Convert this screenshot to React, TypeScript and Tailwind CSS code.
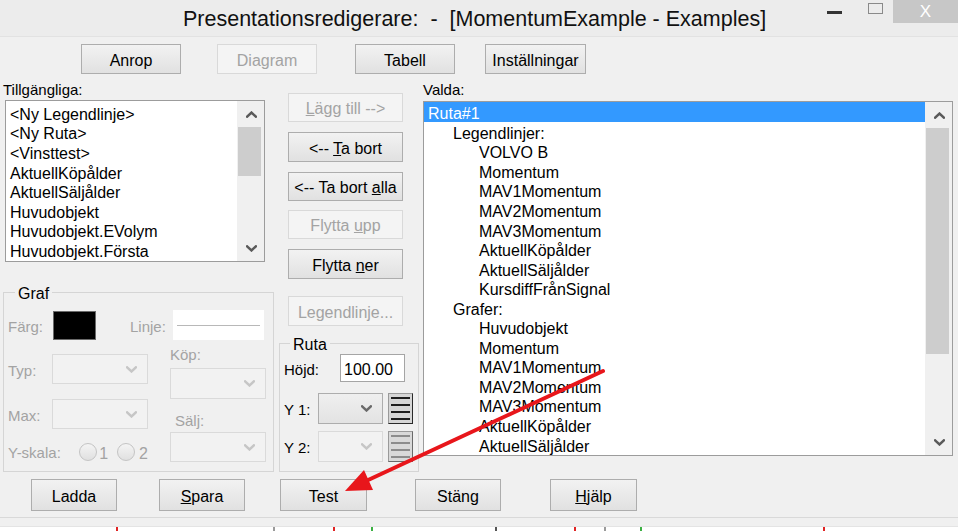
import React from "react";

function Chev({ dir, color, w = 10, h = 6, sw = 2 }: { dir: "up" | "down"; color: string; w?: number; h?: number; sw?: number }) {
  return (
    <svg width={w} height={h} viewBox="0 0 10 6" className="block">
      <path
        d={dir === "up" ? "M1 5 L5 1.2 L9 5" : "M1 1 L5 4.8 L9 1"}
        fill="none"
        stroke={color}
        strokeWidth={sw}
        strokeLinecap="square"
      />
    </svg>
  );
}

function Btn({ children, disabled, className = "" }: { children: React.ReactNode; disabled?: boolean; className?: string }) {
  return (
    <div
      className={`flex items-center justify-center border pt-[3px] text-[16px] leading-none ${
        disabled
          ? "border-[#d9d9d9] bg-[#f4f4f4] text-[#a3a3a3]"
          : "border-[#adadad] bg-linear-to-b from-[#f2f2f2] to-[#e1e1e1] text-black"
      } ${className}`}
    >
      {children}
    </div>
  );
}

function Combo({ disabled, className = "" }: { disabled?: boolean; className?: string }) {
  return (
    <div
      className={`flex items-center justify-end border pr-[10px] ${
        disabled ? "border-[#dadada] bg-[#f2f2f2]" : "border-[#adadad] bg-linear-to-b from-[#efefef] to-[#e3e3e3]"
      } ${className}`}
    >
      <Chev dir="down" color={disabled ? "#c6c6c6" : "#6a6a6a"} w={11} h={7} sw={2.2} />
    </div>
  );
}

function LinesBtn({ disabled }: { disabled?: boolean }) {
  return (
    <div
      className={`ml-[5px] flex h-full w-[25px] flex-col justify-between border border-t-[#9a9a9a] border-l-[#9a9a9a] px-[2px] py-[3px] ${
        disabled
          ? "border-r-[#6a6a6a] border-b-[#6a6a6a] bg-[#d9d9d9]"
          : "border-r-[#2a2a2a] border-b-[#2a2a2a] bg-[#d6d6d6]"
      }`}
    >
      {[0, 1, 2, 3].map((i) => (
        <div key={i} className={`h-[2px] w-full ${disabled ? "bg-[#8c8c8c]" : "bg-[#1e1e1e]"}`} />
      ))}
    </div>
  );
}

function Scroll({ thumbH }: { thumbH: number }) {
  return (
    <div className="flex w-[27px] flex-col bg-[#f0f0f0]">
      <div className="flex h-[26px] items-center justify-center pl-[1px]">
        <Chev dir="up" color="#5a5a5a" w={11} h={7} sw={2.2} />
      </div>
      <div className="ml-[1px] mr-[3px] bg-[#cdcdcd]" style={{ height: thumbH }} />
      <div className="flex-1" />
      <div className="flex h-[26px] items-center justify-center pl-[1px]">
        <Chev dir="down" color="#5a5a5a" w={11} h={7} sw={2.2} />
      </div>
    </div>
  );
}

const leftItems = [
  "<Ny Legendlinje>",
  "<Ny Ruta>",
  "<Vinsttest>",
  "AktuellKöpålder",
  "AktuellSäljålder",
  "Huvudobjekt",
  "Huvudobjekt.EVolym",
  "Huvudobjekt.Första",
];

const rightItems: [number, string][] = [
  [0, "Ruta#1"],
  [1, "Legendlinjer:"],
  [2, "VOLVO B"],
  [2, "Momentum"],
  [2, "MAV1Momentum"],
  [2, "MAV2Momentum"],
  [2, "MAV3Momentum"],
  [2, "AktuellKöpålder"],
  [2, "AktuellSäljålder"],
  [2, "KursdiffFrånSignal"],
  [1, "Grafer:"],
  [2, "Huvudobjekt"],
  [2, "Momentum"],
  [2, "MAV1Momentum"],
  [2, "MAV2Momentum"],
  [2, "MAV3Momentum"],
  [2, "AktuellKöpålder"],
  [2, "AktuellSäljålder"],
];

const ticks: [number, string][] = [
  [116, "bg-[#e02424]"],
  [155, "bg-[#9a9a9a]"],
  [58, "bg-[#e02424]"],
  [36, "bg-[#3cb043]"],
  [122, "bg-[#555555]"],
  [77, "bg-[#e02424]"],
  [28, "bg-[#9a9a9a]"],
  [34, "bg-[#3cb043]"],
  [181, "bg-[#e02424]"],
];

export default function App() {
  return (
    <div className="relative flex h-[531px] w-[958px] flex-col overflow-hidden bg-[#f0f0f0] text-black [font-family:'Liberation_Sans',Arial,sans-serif]">
      {/* Title bar */}
      <div className="flex h-[37px] items-start border-b border-[#e2e2e2] bg-[#ececec]">
        <div className="mt-[6px] pl-[183px] text-[21.5px] leading-[26px] whitespace-pre text-[#111]">
          Presentationsredigerare:  -  [MomentumExample - Examples]
        </div>
        <div className="ml-auto flex items-start">
          <div className="mt-[11px] mr-[26px] h-[3px] w-[15px] bg-[#333]" />
          <div className="mt-[3px] mr-[10px] h-[11px] w-[15px] border border-[#8a8a8a]" />
          <div className="flex h-[23px] w-[65px] items-center justify-center bg-[#c7c7c7] text-[17px] leading-none text-white">
            X
          </div>
        </div>
      </div>

      {/* Top buttons */}
      <div className="mt-[7px] flex h-[30px]">
        <Btn className="ml-[81px] w-[100px]">Anrop</Btn>
        <Btn disabled className="ml-[36px] w-[100px]">Diagram</Btn>
        <Btn className="ml-[38px] w-[100px]">Tabell</Btn>
        <Btn className="ml-[30px] w-[101px]">Inställningar</Btn>
      </div>

      {/* Main area */}
      <div className="mt-[5px] flex h-[394px]">
        {/* Left column */}
        <div className="flex w-[276px] flex-col pl-[3px]">
          <div className="flex h-[21px] items-center pt-[1px] text-[15px]">Tillgängliga:</div>
          <div className="ml-[2px] flex h-[162px] w-[260px] border border-[#9c9c9c] bg-white">
            <div className="flex-1 overflow-hidden pt-[2px] pl-[4px] text-[16px]">
              {leftItems.map((t, i) => (
                <div key={i} className="flex h-[19.6px] items-center whitespace-pre pt-[4px]">
                  {t}
                </div>
              ))}
            </div>
            <Scroll thumbH={49} />
          </div>

          {/* Graf group */}
          <div className="relative mt-[30px] h-[180px] w-[271px] border border-[#d5d5d5]">
            <div className="absolute top-[-9px] left-[11px] bg-[#f0f0f0] px-[3px] text-[16px] leading-[20px]">Graf</div>
            <div className="flex flex-col pt-[17px] pl-[4px] text-[15px] text-[#a3a3a3]">
              <div className="flex h-[30px] items-center">
                <div className="w-[45px] pt-[4px]">Färg:</div>
                <div className="h-[29px] w-[43px] border border-[#6a6a6a] bg-black" />
                <div className="ml-[34px] w-[43px] pt-[4px]">Linje:</div>
                <div className="flex h-[30px] w-[91px] items-center bg-white px-[4px]">
                  <div className="h-[1px] w-full bg-[#b8b8b8]" />
                </div>
              </div>
              <div className="flex">
                <div className="flex w-[140px] flex-col">
                  <div className="mt-[14px] flex h-[30px] items-center">
                    <div className="w-[44px] pt-[4px]">Typ:</div>
                    <Combo disabled className="h-[30px] w-[96px]" />
                  </div>
                  <div className="mt-[15px] flex h-[30px] items-center">
                    <div className="w-[44px] pt-[4px]">Max:</div>
                    <Combo disabled className="h-[30px] w-[96px]" />
                  </div>
                  <div className="mt-[13px] flex h-[20px] items-center">
                    <div className="w-[72px] pt-[3px]">Y-skala:</div>
                    <div className="h-[18px] w-[18px] rounded-full border border-[#c4c4c4] bg-linear-to-b from-[#f4f4f4] to-[#e0e0e0]" />
                    <div className="ml-[2px] pt-[3px] text-[16px]">1</div>
                    <div className="ml-[9px] h-[18px] w-[18px] rounded-full border border-[#c4c4c4] bg-linear-to-b from-[#f4f4f4] to-[#e0e0e0]" />
                    <div className="ml-[4px] pt-[3px] text-[16px]">2</div>
                  </div>
                </div>
                <div className="ml-[22px] flex w-[96px] flex-col">
                  <div className="mt-[4px] flex h-[20px] items-center pt-[3px]">Köp:</div>
                  <Combo disabled className="mt-[4px] h-[31px] w-[96px]" />
                  <div className="mt-[11px] flex h-[20px] items-center pt-[3px] pl-[5px]">Sälj:</div>
                  <Combo disabled className="mt-[2px] h-[30px] w-[96px]" />
                </div>
              </div>
            </div>
          </div>
        </div>

        {/* Middle column */}
        <div className="flex w-[143px] flex-col">
          <Btn disabled className="mt-[14px] ml-[12px] h-[29px] w-[115px]">
            <span>
              <u>L</u>ägg till --&gt;
            </span>
          </Btn>
          <Btn className="mt-[10px] ml-[12px] h-[30px] w-[115px]">
            <span>
              &lt;-- <u>T</u>a bort
            </span>
          </Btn>
          <Btn className="mt-[10px] ml-[12px] h-[29px] w-[115px] text-[15.5px]">
            <span className="whitespace-pre">
              &lt;-- Ta bort <u>a</u>lla
            </span>
          </Btn>
          <Btn disabled className="mt-[9px] ml-[12px] h-[29px] w-[115px]">
            <span>
              Flytta <u>u</u>pp
            </span>
          </Btn>
          <Btn className="mt-[10px] ml-[12px] h-[30px] w-[115px]">
            <span>
              Flytta <u>n</u>er
            </span>
          </Btn>
          <Btn disabled className="mt-[17px] ml-[12px] h-[30px] w-[115px]">
            <span>
              Le<u>g</u>endlinje...
            </span>
          </Btn>

          {/* Ruta group */}
          <div className="relative mt-[17px] ml-[3px] h-[129px] w-[140px] border border-[#d5d5d5]">
            <div className="absolute top-[-9px] left-[10px] bg-[#f0f0f0] px-[3px] text-[16px] leading-[20px]">Ruta</div>
            <div className="flex flex-col pt-[10px] pl-[4px] text-[15px]">
              <div className="flex h-[28px] items-center">
                <div className="w-[56px] pt-[4px]">Höjd:</div>
                <div className="flex h-[28px] w-[65px] items-center border border-[#a5a5a5] bg-white pt-[3px] pl-[3px] text-[16px]">
                  100.00
                </div>
              </div>
              <div className="mt-[11px] flex h-[31px] items-center">
                <div className="w-[34px] pt-[4px]">Y 1:</div>
                <Combo className="h-[31px] w-[65px]" />
                <LinesBtn />
              </div>
              <div className="mt-[7px] flex h-[31px] items-center">
                <div className="w-[34px] pt-[4px]">Y 2:</div>
                <Combo disabled className="h-[31px] w-[65px]" />
                <LinesBtn disabled />
              </div>
            </div>
          </div>
        </div>

        {/* Right column */}
        <div className="ml-[4px] flex w-[530px] flex-col">
          <div className="flex h-[22px] items-center pt-[1px] text-[15px]">Valda:</div>
          <div className="flex h-[355px] border border-[#9c9c9c] bg-white">
            <div className="flex-1 overflow-hidden text-[16px]">
              {rightItems.map(([lvl, t], i) => (
                <div
                  key={i}
                  className={`flex items-center whitespace-pre pt-[4px] ${
                    lvl === 0 ? "pl-[4px]" : lvl === 1 ? "pl-[29px]" : "pl-[55px]"
                  } ${i === 0 ? "h-[20px] bg-[#3399ff] text-white" : "h-[19.55px]"}`}
                >
                  {t}
                </div>
              ))}
            </div>
            <Scroll thumbH={226} />
          </div>
        </div>
      </div>

      {/* Bottom buttons */}
      <div className="mt-[6px] flex h-[32px]">
        <Btn className="ml-[31px] w-[86px]">Ladda</Btn>
        <Btn className="ml-[42px] w-[86px]">
          <span>
            <u>S</u>para
          </span>
        </Btn>
        <Btn className="ml-[35px] w-[87px]">Test</Btn>
        <Btn className="ml-[48px] w-[86px]">Stäng</Btn>
        <Btn className="ml-[49px] w-[87px]">
          <span>
            <u>H</u>jälp
          </span>
        </Btn>
      </div>

      <div className="mt-[6px] h-[1px] bg-[#d9d9d9]" />
      <div className="h-[8px] bg-[#f0f0f0]" />
      <div className="flex h-[5px] items-end border-t border-[#e4e4e4] bg-white">
        {ticks.map(([ml, c], i) => (
          <div key={i} className={`h-[4px] w-[2px] ${c}`} style={{ marginLeft: ml }} />
        ))}
      </div>

      {/* Red arrow annotation overlay */}
      <svg className="pointer-events-none absolute inset-0" width={958} height={531} viewBox="0 0 958 531">
        <line x1={603} y1={371} x2={366} y2={481} stroke="#e8161b" strokeWidth={4} strokeLinecap="round" />
        <polygon points="345,491 364,470 373,490" fill="#e8161b" />
      </svg>
    </div>
  );
}
